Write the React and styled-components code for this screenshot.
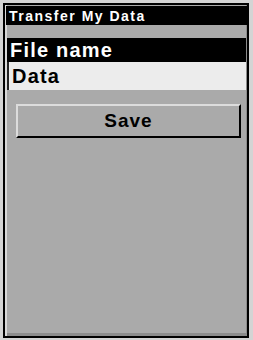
import React from 'react';
import styled, { createGlobalStyle } from 'styled-components';

const GlobalStyle = createGlobalStyle`
  html, body {
    margin: 0;
    padding: 0;
    background: #d4d4d4;
  }
  body {
    font-family: "Liberation Sans", Arial, sans-serif;
  }
`;

const Screen = styled.div`
  box-sizing: border-box;
  width: 253px;
  height: 340px;
  padding: 3px 4px 2px 3px;
`;

const Frame = styled.div`
  box-sizing: border-box;
  height: 100%;
  border: 2px solid #000;
  background: #aaaaaa;
  display: flex;
  flex-direction: column;
  padding: 1px 0 0 0;
  box-shadow: inset 2px 0 0 #d8d8d8, inset -1px -3px 0 #8c8c8c;
`;

const TitleBar = styled.div`
  background: #000;
  color: #fff;
  margin: 0 0 0 1px;
  height: 19px;
  padding: 0 0 0 3px;
  font-size: 14px;
  font-weight: bold;
  letter-spacing: 1.5px;
  line-height: 20px;
  white-space: nowrap;
`;

const Field = styled.div`
  margin: ${(p) => (p.$first ? '13px' : '0')} 1px 0 2px;
  height: ${(p) => (p.$selected ? '24px' : '28px')};
  box-sizing: border-box;
  background: ${(p) => (p.$selected ? '#000' : '#ececec')};
  color: ${(p) => (p.$selected ? '#fff' : '#000')};
  border-left: ${(p) => (p.$selected ? 'none' : '2px solid #222')};
  padding-left: 3px;
  font-size: 20px;
  font-weight: bold;
  letter-spacing: 1.2px;
  line-height: ${(p) => (p.$selected ? '25px' : '28px')};
`;

const SaveButton = styled.button`
  box-sizing: border-box;
  margin: 14px 6px 0 11px;
  height: 34px;
  background: #aaaaaa;
  border: none;
  border-top: 2px solid #dcdcdc;
  border-left: 2px solid #dcdcdc;
  border-right: 2px solid #000;
  border-bottom: 2px solid #000;
  font-family: "Liberation Sans", Arial, sans-serif;
  font-size: 19px;
  font-weight: bold;
  letter-spacing: 1px;
  color: #000;
  padding: 0;
`;

export default function App() {
  return (
    <Screen>
      <GlobalStyle />
      <Frame>
        <TitleBar>Transfer My Data</TitleBar>
        <Field $first $selected>File name</Field>
        <Field>Data</Field>
        <SaveButton>Save</SaveButton>
      </Frame>
    </Screen>
  );
}
